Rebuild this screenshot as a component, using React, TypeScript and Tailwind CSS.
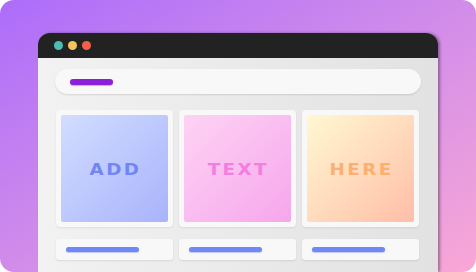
import React from "react";

const tiles = [
  { label: "ADD", bg: "bg-gradient-to-br from-[#d2ddff] to-[#a9b3fb]", text: "text-[#7285f3]" },
  { label: "TEXT", bg: "bg-gradient-to-br from-[#fdd3f4] to-[#f6a6ec]", text: "text-[#f37ede]" },
  { label: "HERE", bg: "bg-gradient-to-br from-[#fff8d2] to-[#ffbea8]", text: "text-[#fcb06f]" },
];

export default function App() {
  return (
    <div className="w-[476px] h-[272px] bg-white">
      <div className="w-[476px] h-[272px] rounded-[14px] overflow-hidden bg-gradient-to-br from-[#ad6cfa] to-[#f9a7d5] pt-[33px] pl-[38px]">
        <div className="w-[400px] h-[239px] rounded-t-[12px] overflow-hidden shadow-[2px_0_3px_rgba(0,0,0,0.35)] flex flex-col">
          <div className="h-[25px] bg-[#222222] flex items-center pl-[16px] gap-[5px]">
            <div className="w-[9px] h-[9px] rounded-full bg-[#4cbdb0]" />
            <div className="w-[9px] h-[9px] rounded-full bg-[#f4c55f]" />
            <div className="w-[9px] h-[9px] rounded-full bg-[#f2604a]" />
          </div>
          <div className="flex-1 bg-gradient-to-r from-[#f2f2f2] to-[#e2e2e2] px-[17px] pt-[11px]">
            <div className="h-[25px] rounded-full bg-[#f8f8f8] shadow-[0_1px_2px_rgba(0,0,0,0.12)] flex items-center pl-[15px]">
              <div className="w-[43px] h-[6px] rounded-full bg-[#8c1fd8] shadow-[0_1px_1px_rgba(80,0,140,0.3)]" />
            </div>
            <div className="mt-[16px] ml-[1px] mr-[2px] grid grid-cols-3 gap-[6px]">
              {tiles.map((t) => (
                <div key={t.label} className="h-[117px] rounded-[4px] bg-[#f8f8f8] shadow-[0_1px_2px_rgba(0,0,0,0.08)] p-[5px]">
                  <div className={`h-full rounded-[2px] ${t.bg} flex items-center justify-center`}>
                    <span
                      className={`${t.text} inline-block mt-[4px] text-[15px] font-bold tracking-[2px] pl-[2px] leading-none scale-x-[1.22]`}
                      style={{ fontFamily: '"DejaVu Sans", sans-serif' }}
                    >
                      {t.label}
                    </span>
                  </div>
                </div>
              ))}
            </div>
            <div className="mt-[12px] ml-[1px] mr-[2px] grid grid-cols-3 gap-[6px]">
              {tiles.map((t) => (
                <div key={t.label} className="h-[21px] rounded-[3px] bg-[#f8f8f8] shadow-[0_1px_2px_rgba(0,0,0,0.1)] flex items-center pl-[10px]">
                  <div className="w-[73px] h-[5px] rounded-full bg-[#6f88f8] shadow-[0_1px_1px_rgba(40,60,200,0.25)]" />
                </div>
              ))}
            </div>
          </div>
        </div>
      </div>
    </div>
  );
}
